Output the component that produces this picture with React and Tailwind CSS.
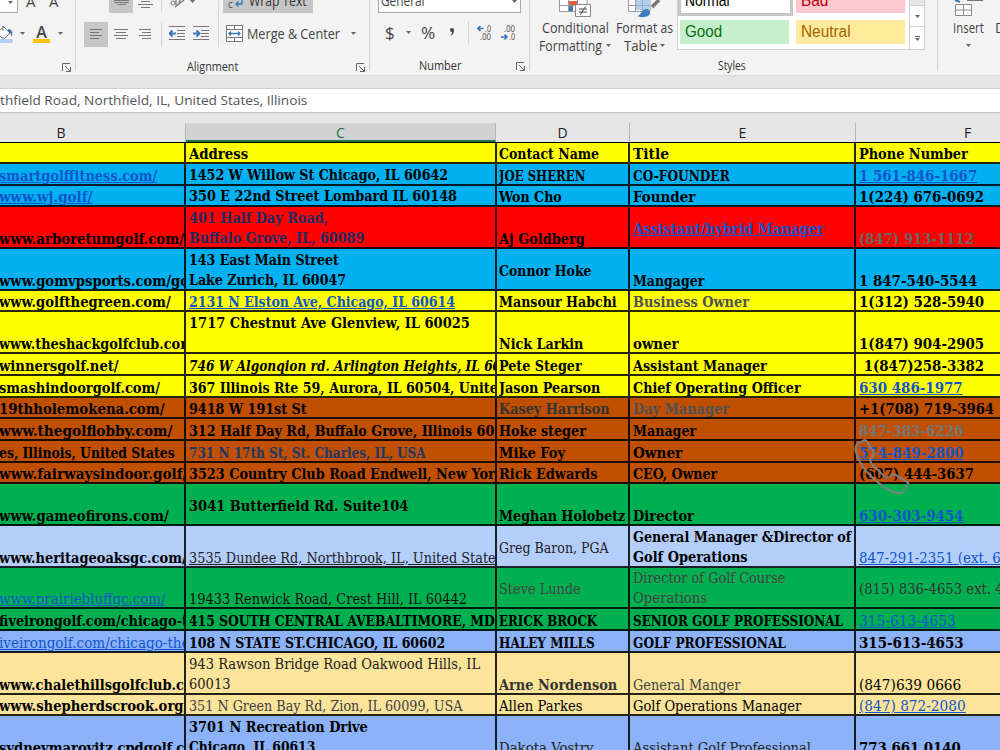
import React, { useLayoutEffect, useRef, useState } from "react";

/* Single line of text stretched or condensed to a given width. */
function Fit({ w, className = "", children }) {
  const ref = useRef(null);
  const [scale, setScale] = useState(1);
  useLayoutEffect(() => {
    const natural = ref.current.offsetWidth;
    if (natural) setScale(w / natural);
  }, [w]);
  return (
    <span className="block shrink-0" style={{ width: w }}>
      <span
        ref={ref}
        className={`inline-block origin-left whitespace-pre align-top ${className}`}
        style={{ transform: `scaleX(${scale})` }}
      >
        {children}
      </span>
    </span>
  );
}

const K = "text-black";
const L = "text-[#1155cc] underline";
const G = "text-[#4d5156]";
const N = "text-[#1f2a60]";

/* cell: [lines, colour, bold, align]; a line is [text, width] */
const c = (text, w, color = K, bold = true, align = "b") => ({ lines: [[text, w]], color, bold, align });
const c2 = (lines, color = K, bold = true) => ({ lines, color, bold, align: "two" });

const BLUE = "bg-[#00b0f0]";
const YEL = "bg-[#ffff00]";
const BRN = "bg-[#c05000]";
const GRN = "bg-[#00b050]";
const PER = "bg-[#8cb3f9]";
const SKY = "bg-[#b4cefb]";
const TAN = "bg-[#fce49a]";

const S = "h-[22px]";
const S1 = "h-[21px]";
const D = "h-[42px]";
const D1 = "h-[41px]";

const rows = [
  [YEL, S1, c("", 0), c("Address", 59), c("Contact Name", 100), c("Title", 36), c("Phone Number", 109)],
  [BLUE, S, c("smartgolffitness.com/", 158, L), c("1452 W Willow St Chicago, IL 60642", 259, K, true, "up"), c("JOE SHEREN", 86), c("CO-FOUNDER", 97), c("1 561-846-1667", 118, L)],
  [BLUE, S1, c("www.wj.golf/", 93, L), c("350 E 22nd Street Lombard IL 60148", 268, K, true, "up"), c("Won Cho", 63), c("Founder", 62), c("1(224) 676-0692", 125)],
  ["bg-[#ff0000]", D, c("www.arboretumgolf.com/", 185), c2([["401 Half Day Road,", 139], ["Buffalo Grove, IL, 60089", 175]], N), c("Aj Goldberg", 86), c("Assistant/hybrid Manager", 191, L, true, "m"), c("(847) 913-1112", 115, "text-[#666666]")],
  [BLUE, D, c("www.gomvpsports.com/go", 190), c2([["143 East Main Street", 150], ["Lake Zurich, IL 60047", 157]]), c("Connor Hoke", 93, K, true, "m"), c("Mangager", 71), c("1 847-540-5544", 118)],
  [YEL, S1, c("www.golfthegreen.com/", 172), c("2131 N Elston Ave, Chicago, IL 60614", 266, L), c("Mansour Habchi", 118), c("Business Owner", 116, G), c("1(312) 528-5940", 125)],
  [YEL, D, c("www.theshackgolfclub.com", 195), c2([["1717 Chestnut Ave Glenview, IL 60025", 281], [" ", 4]]), c("Nick Larkin", 84), c("owner", 46), c("1(847) 904-2905", 125)],
  [YEL, S, c("winnersgolf.net/", 120), c("746 W Algonqion rd. Arlington Heights, IL 60", 312, "text-black italic"), c("Pete Steger", 83), c("Assistant Manager", 134), c(" 1(847)258-3382", 125)],
  [YEL, S, c("smashindoorgolf.com/", 161), c("367 Illinois Rte 59, Aurora, IL 60504, Unite", 309), c("Jason Pearson", 101), c("Chief Operating Officer", 168), c("630 486-1977", 104, L)],
  [BRN, S1, c("19thholemokena.com/", 166), c("9418 W 191st St", 118), c("Kasey Harrison", 111, "text-[#333333]"), c("Day Manager", 96, G), c("+1(708) 719-3964", 135)],
  [BRN, S, c("www.thegolflobby.com/", 173), c("312 Half Day Rd, Buffalo Grove, Illinois 60", 305), c("Hoke steger", 87), c("Manager", 63), c("847-383-6226", 105, "text-[#70757a]")],
  [BRN, S, c("es, Illinois, United States", 176), c("731 N 17th St, St. Charles, IL, USA", 237, "text-[#1f3864]"), c("Mike Foy", 66), c("Owner", 49), c("574-849-2800", 105, L)],
  [BRN, S1, c("www.fairwaysindoor.golf/", 188), c("3523 Country Club Road Endwell, New Yor", 306), c("Rick Edwards", 98), c("CEO, Owner", 84), c("(607) 444-3637", 115)],
  [GRN, D, c("www.gameofirons.com/", 170), c("3041 Butterfield Rd. Suite104", 219, K, true, "m"), c("Meghan Holobetz", 126), c("Director", 61), c("630-303-9454", 105, L)],
  [SKY, D, c("www.heritageoaksgc.com/", 188), c("3535 Dundee Rd, Northbrook, IL, United States", 313, "text-[#202124] underline", false), c("Greg Baron, PGA", 110, "text-[#222222]", false, "m"), c2([["General Manager &Director of", 218], ["Golf Operations", 115]]), c("847-291-2351 (ext. 6", 142, L, false)],
  [GRN, D1, c("www.prairiebluffgc.com/", 166, L, false), c("19433 Renwick Road, Crest Hill, IL 60442", 278, "text-[#111111]", false), c("Steve Lunde", 82, "text-[#444444]", false, "m"), c2([["Director of Golf Course", 152], ["Operations", 74]], "text-[#444444]", false), c("(815) 836-4653 ext. 4", 145, "text-[#333333]", false, "m")],
  [GRN, S, c("fiveirongolf.com/chicago-t", 189), c("415 SOUTH CENTRAL AVEBALTIMORE, MD", 306), c("ERICK BROCK", 98), c("SENIOR GOLF PROFESSIONAL", 210), c("315-613-4653", 97, L, false)],
  [PER, S, c("iveirongolf.com/chicago-the", 191, L, false), c("108 N STATE ST.CHICAGO, IL 60602", 256), c("HALEY MILLS", 96), c("GOLF PROFESSIONAL", 153), c("315-613-4653", 105)],
  [TAN, D, c("www.chalethillsgolfclub.c", 185), c2([["943 Rawson Bridge Road Oakwood Hills, IL", 291], ["60013", 42]], "text-[#222222]", false), c("Arne Nordenson", 118, "text-[#333333]"), c("General Manger", 107, "text-[#444444]", false), c("(847)639 0666", 102, K, false)],
  [TAN, S1, c("www.shepherdscrook.org/", 189), c("351 N Green Bay Rd, Zion, IL 60099, USA", 273, "text-[#3c4043]", false), c("Allen Parkes", 83, K, false), c("Golf Operations Manager", 168, K, false), c("(847) 872-2080", 107, L, false)],
  [PER, D, c("sydneymarovitz.cpdgolf.c", 185), c2([["3701 N Recreation Drive", 179], ["Chicago, IL 60613", 126]]), c("Dakota Vostry", 95, "text-[#222222]", false), c("Assistant Golf Professional", 178, "text-[#222222]", false), c("773 661 0140", 102)],
];

const colWidths = ["w-[186px] border-r-2", "w-[311px] border-r-2 pl-[3px]", "w-[133px] border-r-2 pl-[2px]", "w-[226px] border-r-2 pl-[3px]", "w-[144px] pl-[3px]"];
const aligns = { b: "justify-end -mb-[2px]", up: "justify-end -mb-px", two: "justify-end -mb-px", m: "justify-center pt-[3px]" };

function Cell({ cell, col }) {
  return (
    <div className={`flex h-full shrink-0 border-black/85 ${colWidths[col]}`}>
      <div className="flex min-w-0 flex-1 overflow-hidden">
        <div className={`flex flex-col ${col === 0 ? "-ml-px" : ""} ${aligns[cell.align]}`}>
          {cell.lines.map(([text, w], i) => (
            <Fit key={i} w={w} className={`${cell.color} ${cell.bold ? "font-bold" : ""}`}>
              {text}
            </Fit>
          ))}
        </div>
      </div>
    </div>
  );
}

const Caret = ({ className = "" }) => (
  <svg className={`h-[3px] w-[5px] shrink-0 ${className}`} viewBox="0 0 5 3"><path d="M0 0h5L2.5 3z" fill="#666" /></svg>
);

const Launcher = () => (
  <svg className="h-[9px] w-[9px] shrink-0" viewBox="0 0 9 9" fill="none" stroke="#666">
    <path d="M.5 8V.5H8M3 3l5 5M8.500 4v4.500H4" />
  </svg>
);

const Lines = ({ rows: r, className = "" }) => (
  <svg className={`h-[13px] w-[15px] shrink-0 ${className}`} viewBox="0 0 15 13" stroke="#777">
    {r.map(([y, a, b]) => <path key={y} d={`M${a} ${y}H${b}`} />)}
  </svg>
);

const VLine = ({ className }) => <div className={`w-px shrink-0 bg-[#d4d4d4] ${className}`} />;

const Indent = ({ right, className = "" }) => (
  <svg className={`h-[15px] w-[16px] shrink-0 ${className}`} viewBox="0 0 16 15" fill="none">
    <path d="M0 .5h16M8 4.500h8M8 7.500h8M8 10.500h8M0 13.500h16" stroke="#777" />
    <path d={right ? "M0 7.500h6M3.500 4.500l3 3-3 3" : "M7 7.500H1M3.500 4.500l-3 3 3 3"} stroke="#3b78b5" strokeWidth="2" />
  </svg>
);

const Decimals = ({ more }) => (
  <svg className="h-[16px] w-[15px] shrink-0 font-['Open_Sans',sans-serif] text-[8.500px]" viewBox="0 0 15 16">
    <text x={more ? 8 : 3} y="6.500" textLength={more ? 6 : 11} lengthAdjust="spacingAndGlyphs" fill="#444">{more ? ".0" : ".00"}</text>
    <text x={more ? 3 : 8} y="15" textLength={more ? 11 : 6} lengthAdjust="spacingAndGlyphs" fill="#444">{more ? ".00" : ".0"}</text>
    <path d={more ? "M6.500 3.500H1.500M3.500 1l-2.500 2.500L3.500 6" : "M0 12h5.500M3.500 9.500L6 12l-2.500 2.500"} fill="none" stroke="#3b78b5" strokeWidth="1.700" />
  </svg>
);

function Ribbon() {
  return (
    <div className="flex h-[76px] shrink-0 border-b border-[#d8d8d8] bg-[#f3f3f3] font-['Open_Sans',sans-serif] text-[14px] leading-[18px] text-[#444]">
      {/* font */}
      <div className="flex w-[75px] shrink-0 flex-col">
        <div className="flex h-[21px] items-start">
          <div className="flex h-[13px] w-[18px] items-start justify-center border-r border-b border-[#ababab] bg-white"><Caret className="mt-px ml-[4px]" /></div>
          <span className="-mt-[8px] ml-[8px] w-[23px] text-[15px]">A</span>
          <span className="-mt-[8px] text-[15px]">A</span>
        </div>
        <div className="flex h-[25px] items-center">
          <svg className="h-[18px] w-[14px]" viewBox="0 0 14 18" fill="none">
            <path d="M0 14h13v4H0z" fill="#b4cefb" />
            <path d="M0 5l4-3 6 6-5 5H2L0 11M3 1v5" fill="#fff" stroke="#777" />
            <path d="M8 4c4 0 5 3 4 8-1-3-2-5-4-5z" fill="#3b78b5" />
          </svg>
          <Caret className="ml-[6px]" />
          <div className="ml-[8px] flex h-[18px] w-[17px] flex-col items-center border-b-4 border-[#ffc000]">
            <span className="text-[16px] leading-[14px] font-semibold">A</span>
          </div>
          <Caret className="ml-[8px]" />
        </div>
        <div className="mt-[17px] flex justify-end pr-[4px]"><Launcher /></div>
      </div>
      <VLine className="h-[71px]" />
      {/* alignment */}
      <div className="flex w-[293px] shrink-0 flex-col">
        <div className="flex h-[47px]">
          <div className="flex w-[85px] shrink-0 flex-col">
            <div className="flex h-[22px] items-start pl-[33px]">
              <div className="flex h-[13px] w-[24px] shrink-0 justify-center bg-[#c6c6c6]"><Lines rows={[[0.5, 0, 15], [2.500, 0, 15], [4.500, 3, 12]]} /></div>
              <Lines className="ml-[5px]" rows={[[1.500, 3, 12], [4.500, 0, 15], [7.500, 3, 12]]} />
            </div>
            <div className="flex h-[25px] items-center pl-[8px]">
              <div className="flex h-[25px] w-[24px] shrink-0 items-center justify-center bg-[#c6c6c6]"><Lines rows={[[1.500, 1, 13], [4.500, 1, 10], [7.500, 1, 13], [10.500, 1, 10]]} /></div>
              <Lines className="ml-[6px]" rows={[[1.500, 0, 14], [4.500, 2, 12], [7.500, 0, 14], [10.500, 2, 12]]} />
              <Lines className="ml-[8px]" rows={[[1.500, 2, 14], [4.500, 5, 14], [7.500, 2, 14], [10.500, 5, 14]]} />
            </div>
          </div>
          <div className="flex flex-col justify-between"><VLine className="h-[12px]" /><VLine className="h-[24px]" /></div>
          <div className="flex w-[56px] shrink-0 flex-col">
            <div className="flex h-[21px] items-start pl-[8px]">
              <svg className="h-[8px] w-[17px]" viewBox="0 0 17 8" fill="none" stroke="#777"><circle cx="3" cy="3" r="2" /><path d="M6 0v5M5 7L14 0M10 0l-1 3" strokeWidth="1.300" /></svg>
              <Caret className="ml-[3px]" />
            </div>
            <div className="flex h-[25px] items-center pl-[7px]"><Indent /><Indent right className="ml-[8px]" /></div>
          </div>
          <VLine className="h-[47px]" />
          <div className="flex flex-col pl-[4px]">
            <div className="flex h-[21px] items-start">
              <div className="flex h-[13px] w-[90px] items-start overflow-hidden bg-[#c6c6c6] pl-[5px]">
                <span className="-mt-[5px] w-[7px] text-[10px]">c</span>
                <svg className="mr-[6px] h-[8px] w-[8px] shrink-0" viewBox="0 0 8 8" fill="none" stroke="#3b78b5" strokeWidth="1.300"><path d="M7 0v4H1M3.500 1.500L1 4l2.500 2.500" /></svg>
                <div className="-mt-[8px]"><Fit w={58} className="text-[#333]">Wrap Text</Fit></div>
              </div>
            </div>
            <div className="flex h-[25px] items-center pl-[3px]">
              <svg className="h-[17px] w-[17px] shrink-0" viewBox="0 0 17 17" fill="none"><path d="M.5.5h16v16H.5zM.5 4.500h16M.5 12.500h16M8.500.5v4M8.500 12.500v4" fill="#fff" stroke="#777" /><path d="M3 8.500h11M5 6.500l-2 2 2 2M12 6.500l2 2-2 2" stroke="#3b78b5" strokeWidth="1.300" /></svg>
              <div className="ml-[4px]"><Fit w={93}>Merge &amp; Center</Fit></div>
              <Caret className="ml-[11px]" />
            </div>
          </div>
        </div>
        <div className="mt-[11px] flex items-center pl-[111px] text-[12.500px] text-[#333]">
          <Fit w={51}>Alignment</Fit><div className="ml-[118px]"><Launcher /></div>
        </div>
      </div>
      <VLine className="h-[71px]" />
      {/* number */}
      <div className="flex w-[159px] shrink-0 flex-col">
        <div className="flex h-[21px] items-start pl-[8px]">
          <div className="flex h-[13px] w-[143px] items-start overflow-hidden border border-t-0 border-[#ababab] bg-white pl-[2px]">
            <div className="-mt-[8px]"><Fit w={44}>General</Fit></div><Caret className="ml-[87px]" />
          </div>
        </div>
        <div className="flex h-[25px] items-center pl-[15px] text-[17px]">
          <Fit w={10}>$</Fit><Caret className="ml-[11px]" />
          <div className="ml-[10px] text-[16px]"><Fit w={14}>%</Fit></div>
          <svg className="ml-[14px] h-[9px] w-[6px]" viewBox="0 0 6 9"><path d="M1 2a2 2 0 014 0c0 3-1 5-4 6 1-1 2-2 2-4a2 2 0 01-2-2z" fill="#444" /></svg>
          <VLine className="ml-[13px] h-[23px]" />
          <div className="ml-[8px]"><Decimals more /></div>
          <div className="ml-[9px]"><Decimals /></div>
        </div>
        <div className="mt-[12px] flex items-center pl-[49px] text-[12.500px] text-[#333]">
          <Fit w={42}>Number</Fit><div className="ml-[55px]"><Launcher /></div>
        </div>
      </div>
      <VLine className="h-[71px]" />
      {/* styles */}
      <div className="flex w-[407px] shrink-0 flex-col">
        <div className="flex h-[58px]">
          <div className="flex w-[80px] shrink-0 flex-col items-center pl-[10px]">
            <svg className="h-[19px] w-[33px] shrink-0" viewBox="0 0 33 19" fill="none">
              <path d="M.5 0v11.500H28V0M.5 5.500H28M9.500 0v11.500M18.500 0v11.500" fill="#fff" stroke="#999" />
              <path d="M10 1h8v4h-8z" fill="#d9603b" /><path d="M10 6h4v5h-4z" fill="#3b78b5" />
              <path d="M16.500 4.500h15v12h-15z" fill="#fff" stroke="#888" /><path d="M20 9h8M20 12h8M26.500 6.500l-5 8" stroke="#444" />
            </svg>
            <Fit w={67}>Conditional</Fit>
            <div className="flex items-center leading-[17px]"><Fit w={63}>Formatting</Fit><Caret className="ml-[4px]" /></div>
          </div>
          <div className="flex w-[67px] shrink-0 flex-col items-center pl-[2px]">
            <svg className="h-[19px] w-[33px] shrink-0" viewBox="0 0 33 19" fill="none">
              <path d="M.5 0v11.500H22V0M.5 5.500H22M7.500 0v11.500M14.500 0v11.500" fill="#fff" stroke="#999" />
              <path d="M8 0h14v10H8z" fill="#b5cfe9" /><path d="M14.500 0v10M8 5.500h14" stroke="#8caed0" />
              <path d="M31 0l-7 7" stroke="#777" strokeWidth="3.500" />
              <path d="M9 16c4 0 4-7 10-7 4 1 4 5 1 7-3 1.500-8 1.500-11 0z" fill="#3b7fc0" />
            </svg>
            <Fit w={57}>Format as</Fit>
            <div className="flex items-center leading-[17px]"><Fit w={33}>Table</Fit><Caret className="ml-[3px]" /></div>
          </div>
          <div className="flex h-[50px] w-[248px] shrink-0 border border-t-0 border-[#d0d0d0] bg-white font-['Liberation_Sans',sans-serif] text-[16px]">
            <div className="flex w-[231px] shrink-0 flex-col">
              <div className="flex h-[16px] items-start">
                <div className="flex h-[16px] w-[115px] shrink-0 items-start overflow-hidden border-[3px] border-t-0 border-[#c6c6c6] pl-[4px] text-black"><div className="-mt-[8px]"><Fit w={45}>Normal</Fit></div></div>
                <div className="ml-[3px] flex h-[13px] w-[109px] shrink-0 items-start overflow-hidden bg-[#ffc7ce] pl-[5px] text-[#b00010]"><div className="-mt-[8px]"><Fit w={27}>Bad</Fit></div></div>
              </div>
              <div className="mt-[4px] flex h-[24px] items-center pl-[2px]">
                <div className="flex h-full w-[109px] items-center bg-[#c6efce] pl-[5px] text-[#0a7010]"><Fit w={37}>Good</Fit></div>
                <div className="ml-[7px] flex h-full w-[109px] items-center bg-[#ffeb9c] pl-[5px] text-[#a56200]"><Fit w={50}>Neutral</Fit></div>
              </div>
            </div>
            <div className="flex flex-1 flex-col border-l border-[#d0d0d0]">
              <div className="h-[6px] border-b border-[#d0d0d0] bg-[#e6e6e6]" />
              <div className="flex h-[21px] items-center justify-center border-b border-[#d0d0d0]"><Caret /></div>
              <div className="flex flex-1 flex-col items-center justify-center gap-px"><div className="h-px w-[5px] bg-[#666]" /><Caret /></div>
            </div>
          </div>
        </div>
        <div className="flex items-center pl-[188px] text-[12.500px] text-[#333]"><Fit w={28}>Styles</Fit></div>
      </div>
      <VLine className="h-[71px]" />
      {/* cells */}
      <div className="flex flex-1 overflow-hidden">
        <div className="flex w-[57px] shrink-0 flex-col items-center pl-[4px]">
          <svg className="h-[19px] w-[30px] shrink-0" viewBox="0 0 30 19" fill="none">
            <path d="M1.500 4.500h16v11h-16zM1.500 10h16M9.500 4.500v11" fill="#fff" stroke="#888" />
            <path d="M13 0h16" stroke="#777" strokeWidth="2" /><path d="M1 0l5 2" stroke="#3b78b5" strokeWidth="2" />
          </svg>
          <Fit w={31}>Insert</Fit>
          <Caret className="mt-[7px]" />
        </div>
        <div className="pt-[19px]"><span>D</span></div>
      </div>
    </div>
  );
}

export default function App() {
  return (
    <div className="relative flex h-[750px] w-[1000px] flex-col overflow-hidden bg-[#e6e6e6]">
      <Ribbon />
      <div className="mt-[12px] flex h-[25px] shrink-0 items-center border-t border-b border-[#d0d0d0] border-b-[#c4c4c4] bg-white font-['Open_Sans',sans-serif] text-[13.500px] text-[#555]">
        <Fit w={307}>thfield Road, Northfield, IL, United States, Illinois</Fit>
      </div>
      <div className="mt-[10px] flex h-[19px] shrink-0 font-['Open_Sans',sans-serif] text-[14px] leading-[20px] text-[#222]">
        <div className="w-[186px] border-r border-[#b5b5b5] pr-[63px] text-right"><span className="inline-block w-[122px] text-center">B</span></div>
        <div className="w-[310px] border-r border-b-2 border-r-[#b5b5b5] border-b-[#217346] bg-[#d2d2d2] text-center text-[#217346]">C</div>
        <div className="w-[134px] border-r border-[#b5b5b5] text-center">D</div>
        <div className="w-[226px] border-r border-[#b5b5b5] text-center">E</div>
        <div className="w-[144px] pl-[108px]">F</div>
      </div>
      <div className="flex shrink-0 flex-col border-t border-black font-['DejaVu_Serif_Condensed','DejaVu_Serif',serif] text-[14.500px] leading-[20px]">
        {rows.map(([bg, h, ...cells], i) => (
          <div key={i} className={`flex shrink-0 border-b-2 border-black/85 ${bg} ${h}`}>
            {cells.map((cell, j) => <Cell key={j} cell={cell} col={j} />)}
          </div>
        ))}
      </div>
      <svg className="absolute top-[438px] left-[853px] h-[58px] w-[58px]" viewBox="580 565 175 175" fill="none" stroke="#808080" strokeWidth="6">
        <path d="M592 585L612 572Q619 569 623 577L643 610Q644 618 634 626Q628 632 640 648L678 683Q684 688 692 680L702 674Q708 673 714 680L742 697Q748 700 746 706Q738 728 722 732Q700 732 672 712C630 680 600 650 588 605Q586 590 592 585Z" />
      </svg>
    </div>
  );
}
